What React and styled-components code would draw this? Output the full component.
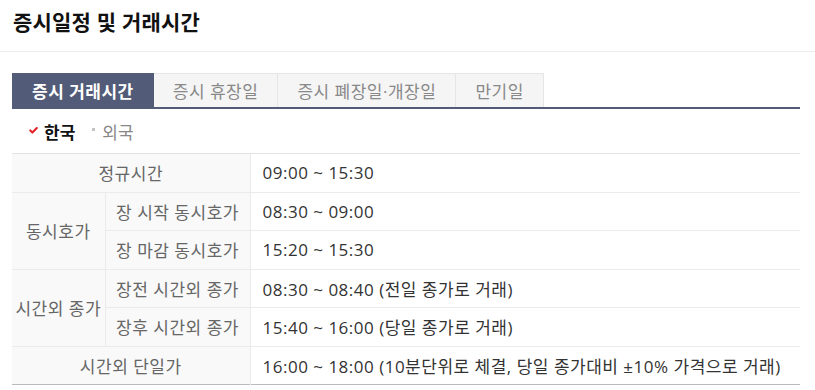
import React, { useState } from 'react';
import styled, { createGlobalStyle } from 'styled-components';

const GlobalStyle = createGlobalStyle`
  html, body {
    margin: 0;
    padding: 0;
    background: #ffffff;
    font-family: "Open Sans", "Noto Sans CJK KR", sans-serif;
    color: #333;
  }
`;

const tabs = ['증시 거래시간', '증시 휴장일', '증시 폐장일·개장일', '만기일'];

const rows = [
  { group: '정규시간', time: '09:00 ~ 15:30' },
  { group: '동시호가', span: 2, sub: '장 시작 동시호가', time: '08:30 ~ 09:00' },
  { sub: '장 마감 동시호가', time: '15:20 ~ 15:30' },
  { group: '시간외 종가', span: 2, sub: '장전 시간외 종가', time: '08:30 ~ 08:40 (전일 종가로 거래)' },
  { sub: '장후 시간외 종가', time: '15:40 ~ 16:00 (당일 종가로 거래)' },
  { group: '시간외 단일가', time: '16:00 ~ 18:00 (10분단위로 체결, 당일 종가대비 ±10% 가격으로 거래)' },
];

const App = () => {
  const [active, setActive] = useState(0);
  const [market, setMarket] = useState('kr');

  return (
    <>
      <GlobalStyle />
      <Header>
        <Title>증시일정 및 거래시간</Title>
      </Header>
      <Content>
        <TabBar>
          {tabs.map((t, i) => (
            <Tab key={t} $active={i === active} onClick={() => setActive(i)}>
              {t}
            </Tab>
          ))}
        </TabBar>
        <Filter>
          <FilterItem $on={market === 'kr'} onClick={() => setMarket('kr')}>
            {market === 'kr' ? <Check /> : <Dot />}
            한국
          </FilterItem>
          <FilterItem $on={market === 'foreign'} onClick={() => setMarket('foreign')}>
            {market === 'foreign' ? <Check /> : <Dot />}
            외국
          </FilterItem>
        </Filter>
        <Table>
          <colgroup>
            <col style={{ width: 93 }} />
            <col style={{ width: 145 }} />
            <col />
          </colgroup>
          <tbody>
            {rows.map((r, i) => (
              <tr key={i}>
                {r.group && !r.sub && <Label colSpan={2}>{r.group}</Label>}
                {r.group && r.sub && <Label rowSpan={r.span}>{r.group}</Label>}
                {r.sub && <Label>{r.sub}</Label>}
                <Value>{r.time}</Value>
              </tr>
            ))}
          </tbody>
        </Table>
      </Content>
    </>
  );
};

const Check = () => (
  <CheckIcon viewBox="0 0 9 7">
    <path d="M1.3 3.4 L3.4 5.6 L7.8 1.1" fill="none" stroke="#e0232b" strokeWidth="2.1" strokeLinecap="round" strokeLinejoin="round" />
  </CheckIcon>
);

export default App;

const Header = styled.header`
  height: 51px;
  display: flex;
  align-items: center;
  padding: 0 13px;
  border-bottom: 1px solid #ececec;
`;

const Title = styled.h1`
  margin: 0;
  font-size: 21px;
  font-weight: 700;
  color: #111;
  letter-spacing: 0.2px;
  padding-bottom: 9px;
`;

const Content = styled.main`
  width: 788px;
  margin: 21px 0 0 12px;
`;

const TabBar = styled.nav`
  display: flex;
  border-bottom: 2px solid #525b77;
`;

const Tab = styled.button`
  height: 34px;
  padding: 0 19px;
  margin: 0;
  font-family: inherit;
  font-size: 17px;
  letter-spacing: 0.5px;
  font-weight: ${(p) => (p.$active ? 700 : 400)};
  color: ${(p) => (p.$active ? '#ffffff' : '#888888')};
  background: ${(p) => (p.$active ? '#525b77' : '#f5f5f5')};
  border: 1px solid ${(p) => (p.$active ? '#525b77' : '#e6e6e6')};
  border-bottom: none;
  border-left: ${(p) => (p.$active ? '1px solid #525b77' : 'none')};
  cursor: pointer;
`;

const Filter = styled.div`
  height: 44px;
  display: flex;
  align-items: center;
  gap: 17px;
  padding-left: 17px;
`;

const FilterItem = styled.span`
  display: inline-flex;
  align-items: center;
  gap: 6px;
  font-size: 17px;
  font-weight: ${(p) => (p.$on ? 700 : 400)};
  color: ${(p) => (p.$on ? '#111' : '#888')};
  cursor: pointer;
`;

const CheckIcon = styled.svg`
  width: 9px;
  height: 7px;
  margin-top: -2px;
`;

const Dot = styled.i`
  width: 3px;
  height: 3px;
  background: #c4c4c4;
  margin: -4px 1px 0 0;
`;

const Table = styled.table`
  width: 100%;
  border-collapse: collapse;
  table-layout: fixed;
  border-top: 1px solid #e2e2e2;
  border-bottom: 1px solid #b9b9bf;
  font-size: 17px;
  letter-spacing: 0.5px;

  tr + tr td,
  tr + tr th {
    border-top: 1px solid #ebebeb;
  }
`;

const Label = styled.th`
  height: 37.5px;
  padding: 0;
  background: #f9f9f9;
  color: #666;
  font-weight: 400;
  text-align: center;
  border-right: 1px solid #ebebeb;
  border-left: 1px solid #ebebeb;

  &:first-child {
    border-left: none;
  }
`;

const Value = styled.td`
  height: 37.5px;
  padding: 0 12px;
  color: #333;
  text-align: left;
`;
